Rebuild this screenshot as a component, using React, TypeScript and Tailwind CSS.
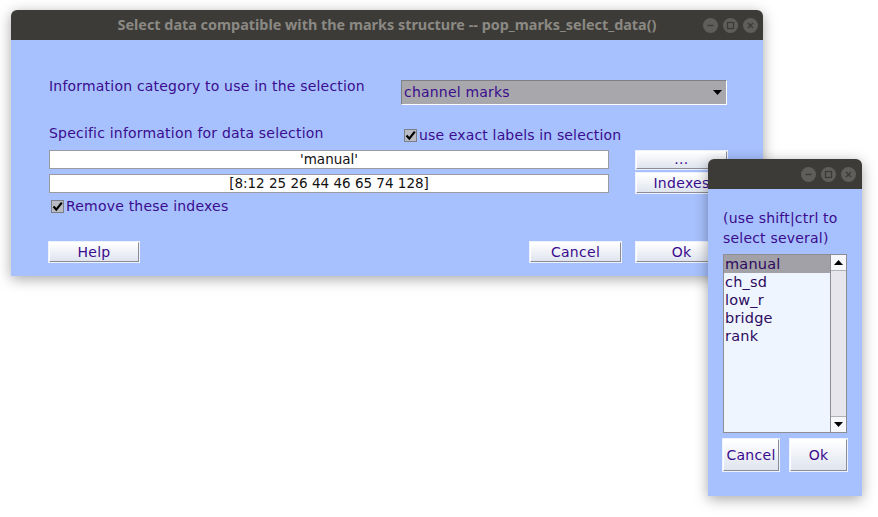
import React from "react";

const font = { fontFamily: '"DejaVu Sans", sans-serif' };

const WinButtons = () => (
  <div className="flex gap-[5px]">
    {["min", "max", "close"].map((k) => (
      <div key={k} className="w-[15px] h-[15px] rounded-full bg-[#5f5e5a] flex items-center justify-center">
        <svg width="9" height="9" viewBox="0 0 9 9">
          {k === "min" && <line x1="1.5" y1="4.5" x2="7.5" y2="4.5" stroke="#3c3b37" strokeWidth="1.4" />}
          {k === "max" && <rect x="1.5" y="1.5" width="6" height="6" fill="none" stroke="#3c3b37" strokeWidth="1.3" />}
          {k === "close" && (
            <path d="M2 2 L7 7 M7 2 L2 7" stroke="#3c3b37" strokeWidth="1.4" />
          )}
        </svg>
      </div>
    ))}
  </div>
);

const Btn = ({ label, className }: { label: string; className: string }) => (
  <div
    className={`flex items-center justify-center border border-t-white border-l-white border-b-[#8a8d96] border-r-[#8a8d96] bg-gradient-to-b from-[#ffffff] to-[#dfe4ee] outline outline-1 outline-[#eef2ff] text-[14px] tracking-[0.3px] text-[#3a0c8e] ${className}`}
  >
    {label}
  </div>
);

const Check = () => (
  <div className="w-[13px] h-[13px] bg-[#b9bcc4] border border-[#7c7f88] flex items-center justify-center">
    <svg width="11" height="11" viewBox="0 0 11 11">
      <path d="M1.5 5.5 L4.3 8.6 L9.8 1.6" fill="none" stroke="#000" strokeWidth="2.2" />
    </svg>
  </div>
);

export default function App() {
  return (
    <div className="relative w-[878px] h-[517px] bg-white overflow-hidden" style={font}>
      {/* main dialog */}
      <div className="absolute left-[11px] top-[10px] w-[752px] shadow-[0_3px_14px_rgba(0,0,0,0.35)] rounded-t-[6px]">
        <div className="h-[30px] bg-[#3c3b37] rounded-t-[6px] flex items-center relative">
          <div
            className="flex-1 text-center text-[14.4px] font-bold text-[#8b8983]"
            style={{ fontFamily: '"Noto Sans", "Open Sans", sans-serif' }}
          >
            Select data compatible with the marks structure -- pop_marks_select_data()
          </div>
          <div className="absolute right-[5px] top-[8px]">
            <WinButtons />
          </div>
        </div>
        <div className="h-[236px] bg-[#a7c1fe] pl-[38px] pt-[40px] text-[14px] tracking-[0.2px] text-[#3a0c8e]">
          <div className="flex items-center h-[25px]">
            <div className="w-[352px] -mt-[12px]">Information category to use in the selection</div>
            <div className="w-[326px] h-[25px] bg-[#a8a7ac] border border-[#7f7f85] border-b-white border-r-white flex items-center justify-between pl-[2px] pr-[4px]">
              <span>channel marks</span>
              <svg width="9" height="5" viewBox="0 0 9 5">
                <path d="M0 0 H9 L4.5 5 Z" fill="#000" />
              </svg>
            </div>
          </div>
          <div className="flex items-center h-[20px] mt-[20px]">
            <div className="w-[355px] -mt-[3px]">Specific information for data selection</div>
            <Check />
            <span className="ml-[2px] tracking-[0.15px]">use exact labels in selection</span>
          </div>
          <div className="flex items-center mt-[5px] h-[19px]">
            <div className="w-[560px] h-[19px] bg-white border border-[#9a9aa0] flex items-center justify-center text-[#111] text-[13.5px] tracking-normal">
              'manual'
            </div>
            <Btn label="..." className="ml-[27px] w-[91px] h-[18px]" />
          </div>
          <div className="flex items-center mt-[4px] h-[20px]">
            <div className="w-[560px] h-[19px] bg-white border border-[#9a9aa0] flex items-center justify-center text-[#111] text-[13.5px] tracking-normal">
              [8:12 25 26 44 46 65 74 128]
            </div>
            <Btn label="Indexes" className="ml-[27px] w-[91px] h-[20px]" />
          </div>
          <div className="flex items-center mt-[7px] h-[13px] pl-[2px]">
            <Check />
            <span className="ml-[2px]">Remove these indexes</span>
          </div>
          <div className="flex items-center mt-[29px]">
            <Btn label="Help" className="w-[90px] h-[20px]" />
            <Btn label="Cancel" className="ml-[391px] w-[91px] h-[20px]" />
            <Btn label="Ok" className="ml-[15px] w-[91px] h-[20px]" />
          </div>
        </div>
      </div>

      {/* list popup */}
      <div className="absolute left-[708px] top-[159px] w-[154px] shadow-[0_3px_14px_rgba(0,0,0,0.35)] rounded-t-[6px]">
        <div className="h-[30px] bg-[#3c3b37] rounded-t-[6px] flex items-center justify-end pr-[6px]">
          <WinButtons />
        </div>
        <div className="h-[307px] bg-[#a7c1fe] pl-[15px] pt-[19px] text-[14px] tracking-[0.2px] text-[#3a0c8e]">
          <div className="leading-[20px]">
            (use shift|ctrl to
            <br />
            select several)
          </div>
          <div className="mt-[6px] w-[124px] h-[179px] border border-[#8d8d92] bg-[#eef5ff] flex">
            <div className="flex-1 text-[#2d0a5e] text-[14.5px]">
              {["manual", "ch_sd", "low_r", "bridge", "rank"].map((t, i) => (
                <div
                  key={t}
                  className={`h-[18px] leading-[18px] pl-[1px] ${i === 0 ? "bg-[#a1a1a7]" : ""}`}
                >
                  {t}
                </div>
              ))}
            </div>
            <div className="w-[16px] border-l border-[#8d8d92] bg-[#e7e6ec] flex flex-col justify-between">
              <div className="h-[16px] bg-[#f6f7fb] border-b border-[#b0b0b6] flex items-center justify-center">
                <svg width="9" height="5" viewBox="0 0 9 5">
                  <path d="M0 5 H9 L4.5 0 Z" fill="#000" />
                </svg>
              </div>
              <div className="h-[16px] bg-[#f6f7fb] border-t border-[#b0b0b6] flex items-center justify-center">
                <svg width="9" height="5" viewBox="0 0 9 5">
                  <path d="M0 0 H9 L4.5 5 Z" fill="#000" />
                </svg>
              </div>
            </div>
          </div>
          <div className="flex mt-[6px]">
            <Btn label="Cancel" className="w-[56px] h-[32px]" />
            <Btn label="Ok" className="ml-[11px] w-[57px] h-[32px]" />
          </div>
        </div>
      </div>
    </div>
  );
}
